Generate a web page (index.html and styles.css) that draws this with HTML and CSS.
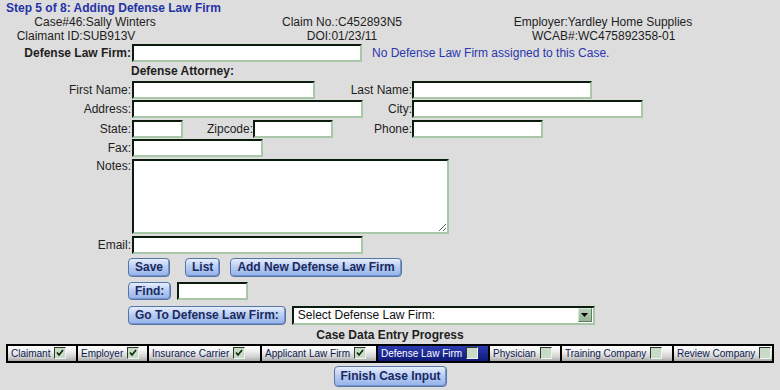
FILE: index.html
```html
<!DOCTYPE html>
<html>
  <head>
    <link rel="stylesheet" href="styles.css">
  </head>

  <body>

    <div class="title">Step 5 of 8: Adding Defense Law Firm</div>
    <div class="info info-a">
      <span>Case#46:Sally Winters</span>
      <span>Claim No.:C452893N5</span>
      <span>Employer:Yardley Home Supplies</span>
    </div>
    <div class="info info-b">
      <span>Claimant ID:SUB913V</span>
      <span>DOI:01/23/11</span>
      <span>WCAB#:WC475892358-01</span>
    </div>

    <div class="row firm-row">
      <label class="lbl strong">Defense Law Firm:</label>
      <input type="text" class="field w230" />
      <span class="note">No Defense Law Firm assigned to this Case.</span>
    </div>
    <div class="section">Defense Attorney:</div>

    <div class="row">
      <label class="lbl">First Name:</label>
      <div class="mid">
        <input type="text" class="field w183" />
        <label class="lbl2">Last Name:</label>
      </div>
      <input type="text" class="field w180" />
    </div>
    <div class="row">
      <label class="lbl">Address:</label>
      <div class="mid">
        <input type="text" class="field w231" />
        <label class="lbl2">City:</label>
      </div>
      <input type="text" class="field w231" />
    </div>
    <div class="row">
      <label class="lbl">State:</label>
      <div class="mid">
        <input type="text" class="field w51" />
        <label class="lbl-zip">Zipcode:</label>
        <input type="text" class="field w80" />
        <label class="lbl2">Phone:</label>
      </div>
      <input type="text" class="field w131" />
    </div>
    <div class="row">
      <label class="lbl">Fax:</label>
      <input type="text" class="field w131" />
    </div>
    <div class="row notes-row">
      <label class="lbl">Notes:</label>
      <textarea class="field notes"></textarea>
    </div>
    <div class="row email-row">
      <label class="lbl">Email:</label>
      <input type="text" class="field w231" />
    </div>

    <div class="btn-row save-row">
      <button class="btn">Save</button>
      <button class="btn list-btn">List</button>
      <button class="btn add-btn">Add New Defense Law Firm</button>
    </div>
    <div class="btn-row find-row">
      <button class="btn small">Find:</button>
      <input type="text" class="field find-field" />
    </div>
    <div class="btn-row goto-row">
      <button class="btn">Go To Defense Law Firm:</button>
      <div class="picker">
        <select>
          <option>Select Defense Law Firm:</option>
        </select>
        <span class="picker-arrow">
          <svg width="7" height="4" viewBox="0 0 7 4"><path d="M0 0h7L3.5 4z" fill="#000"/></svg>
        </span>
      </div>
    </div>

    <div class="progress-title">Case Data Entry Progress</div>
    <div class="progress">
      <div class="step s-claimant">Claimant <span class="box"><svg width="10" height="10" viewBox="0 0 10 10"><path d="M2 4.5l2 2.5 4-5" stroke="#0d2a0d" stroke-width="1.6" fill="none"/></svg></span></div>
      <div class="step s-employer">Employer <span class="box"><svg width="10" height="10" viewBox="0 0 10 10"><path d="M2 4.5l2 2.5 4-5" stroke="#0d2a0d" stroke-width="1.6" fill="none"/></svg></span></div>
      <div class="step s-carrier">Insurance Carrier <span class="box"><svg width="10" height="10" viewBox="0 0 10 10"><path d="M2 4.5l2 2.5 4-5" stroke="#0d2a0d" stroke-width="1.6" fill="none"/></svg></span></div>
      <div class="step s-applicant">Applicant Law Firm <span class="box"><svg width="10" height="10" viewBox="0 0 10 10"><path d="M2 4.5l2 2.5 4-5" stroke="#0d2a0d" stroke-width="1.6" fill="none"/></svg></span></div>
      <div class="step s-defense current">Defense Law Firm <span class="box"></span></div>
      <div class="step s-physician">Physician <span class="box"></span></div>
      <div class="step s-training">Training Company <span class="box"></span></div>
      <div class="step s-review">Review Company <span class="box"></span></div>
    </div>
    <div class="finish-row">
      <button class="btn finish">Finish Case Input</button>
    </div>

  </body>

</html>
```

FILE: styles.css
```css
* {
  box-sizing: border-box;
}

body {
  margin: 0;
  padding-top: 1px;
  background-color: #dddddd;
  font: 12px "Liberation Sans", Arial, sans-serif;
  color: #1e1e1e;
}

.title {
  margin-left: 6px;
  height: 14px;
  line-height: 14px;
  font-weight: bold;
  color: #2433a6;
}

.info {
  display: grid;
  height: 14px;
  line-height: 14px;
}

.info span {
  text-align: center;
  white-space: nowrap;
}

.info-a {
  grid-template-columns: 190px 304px 218px;
}

.info-b {
  grid-template-columns: 152px 380px 122px;
}

.row {
  display: flex;
  align-items: flex-start;
  height: 19.4px;
  line-height: 18px;
}

.firm-row {
  margin-top: 1px;
  height: 18px;
}

.lbl {
  flex: none;
  width: 132px;
  padding-right: 1px;
  text-align: right;
}

.strong {
  font-weight: bold;
}

.note {
  margin-left: 10px;
  color: #2b35b0;
}

.section {
  height: 19px;
  line-height: 19px;
  padding-left: 131px;
  font-weight: bold;
}

.mid {
  display: flex;
  flex: none;
  width: 280px;
}

.lbl2 {
  flex: 1;
  text-align: right;
}

.lbl-zip {
  width: 70px;
  text-align: right;
}

.field {
  flex: none;
  height: 18px;
  padding: 0 2px;
  border: 2px solid;
  border-color: #0c1c0c #a8c6a8 #a8c6a8 #0c1c0c;
  background-color: #fff;
  font: inherit;
  outline: none;
}

.w51 { width: 51px; }
.w80 { width: 80px; }
.w131 { width: 131px; }
.w180 { width: 180px; }
.w183 { width: 183px; }
.w230 { width: 230px; }
.w231 { width: 231px; }

.notes-row {
  height: 75px;
  line-height: 14px;
}

.notes {
  width: 317px;
  height: 75px;
  resize: both;
}

.email-row {
  margin-top: 2px;
  height: 18px;
}

.btn-row {
  display: flex;
  align-items: center;
  padding-left: 128px;
}

.save-row {
  margin-top: 4px;
}

.find-row {
  margin-top: 5px;
}

.goto-row {
  margin-top: 6px;
}

.btn {
  height: 19px;
  padding: 0 6px;
  border: 1px solid #5873a6;
  border-radius: 4px;
  background: linear-gradient(#e6eefd, #b9cdf3 45%, #94b2e8);
  box-shadow: inset -1px -1px 0 #7593cc;
  font: bold 12px "Liberation Sans", Arial, sans-serif;
  color: #1b2a5e;
}

.btn.small {
  height: 18px;
}

.list-btn {
  margin-left: 15px;
}

.add-btn {
  margin-left: 10px;
}

.find-field {
  width: 71px;
  margin-left: 6px;
}

.picker {
  display: flex;
  align-items: center;
  width: 303px;
  height: 19px;
  margin-left: 6px;
  border: 2px solid;
  border-color: #0c1c0c #a8c6a8 #a8c6a8 #0c1c0c;
  background-color: #fff;
}

.picker select {
  flex: 1;
  height: 15px;
  padding: 0 0 0 4px;
  border: 0;
  background: transparent;
  appearance: none;
  font: 12px "Liberation Sans", Arial, sans-serif;
  color: #111;
  outline: none;
}

.picker-arrow {
  display: flex;
  align-items: center;
  justify-content: center;
  width: 14px;
  height: 14px;
  margin-right: 1px;
  border: 1px solid;
  border-color: #d8e8d8 #5f7f5f #5f7f5f #d8e8d8;
  background: linear-gradient(#b8d0b8, #97b597);
}

.progress-title {
  margin-top: 2px;
  height: 17px;
  line-height: 17px;
  text-align: center;
  font-weight: bold;
}

.progress {
  display: flex;
  gap: 2px;
  width: 768px;
  height: 19px;
  margin-left: 6px;
  padding: 2px;
  background-color: #000;
}

.step {
  display: flex;
  align-items: center;
  flex: none;
  padding-left: 3px;
  background: linear-gradient(#ffffff, #f0f0f0 35%, #cfcfcf 75%, #a9a9a9);
  font: 10px "Liberation Sans", Arial, sans-serif;
  color: #0d1a4d;
  white-space: nowrap;
}

.step.current {
  background: linear-gradient(#2d3db0, #18258e 60%, #0f1a78);
  color: #fff;
}

.box {
  display: inline-flex;
  align-items: center;
  justify-content: center;
  width: 12px;
  height: 12px;
  margin-left: 4px;
  border: 1px solid;
  border-color: #2c3a2c #eef5ee #eef5ee #2c3a2c;
  background-color: #c7dbc7;
}

.s-claimant { width: 68px; }
.s-employer { width: 69px; }
.s-carrier { width: 111px; }
.s-applicant { width: 114px; }
.s-defense { width: 110px; }
.s-physician { width: 70px; }
.s-training { width: 110px; }
.s-review { flex: 1; }

.finish-row {
  display: flex;
  justify-content: center;
  margin-top: 3px;
  padding-left: 1px;
}

.btn.finish {
  height: 21px;
  padding: 0 5px;
}
```
